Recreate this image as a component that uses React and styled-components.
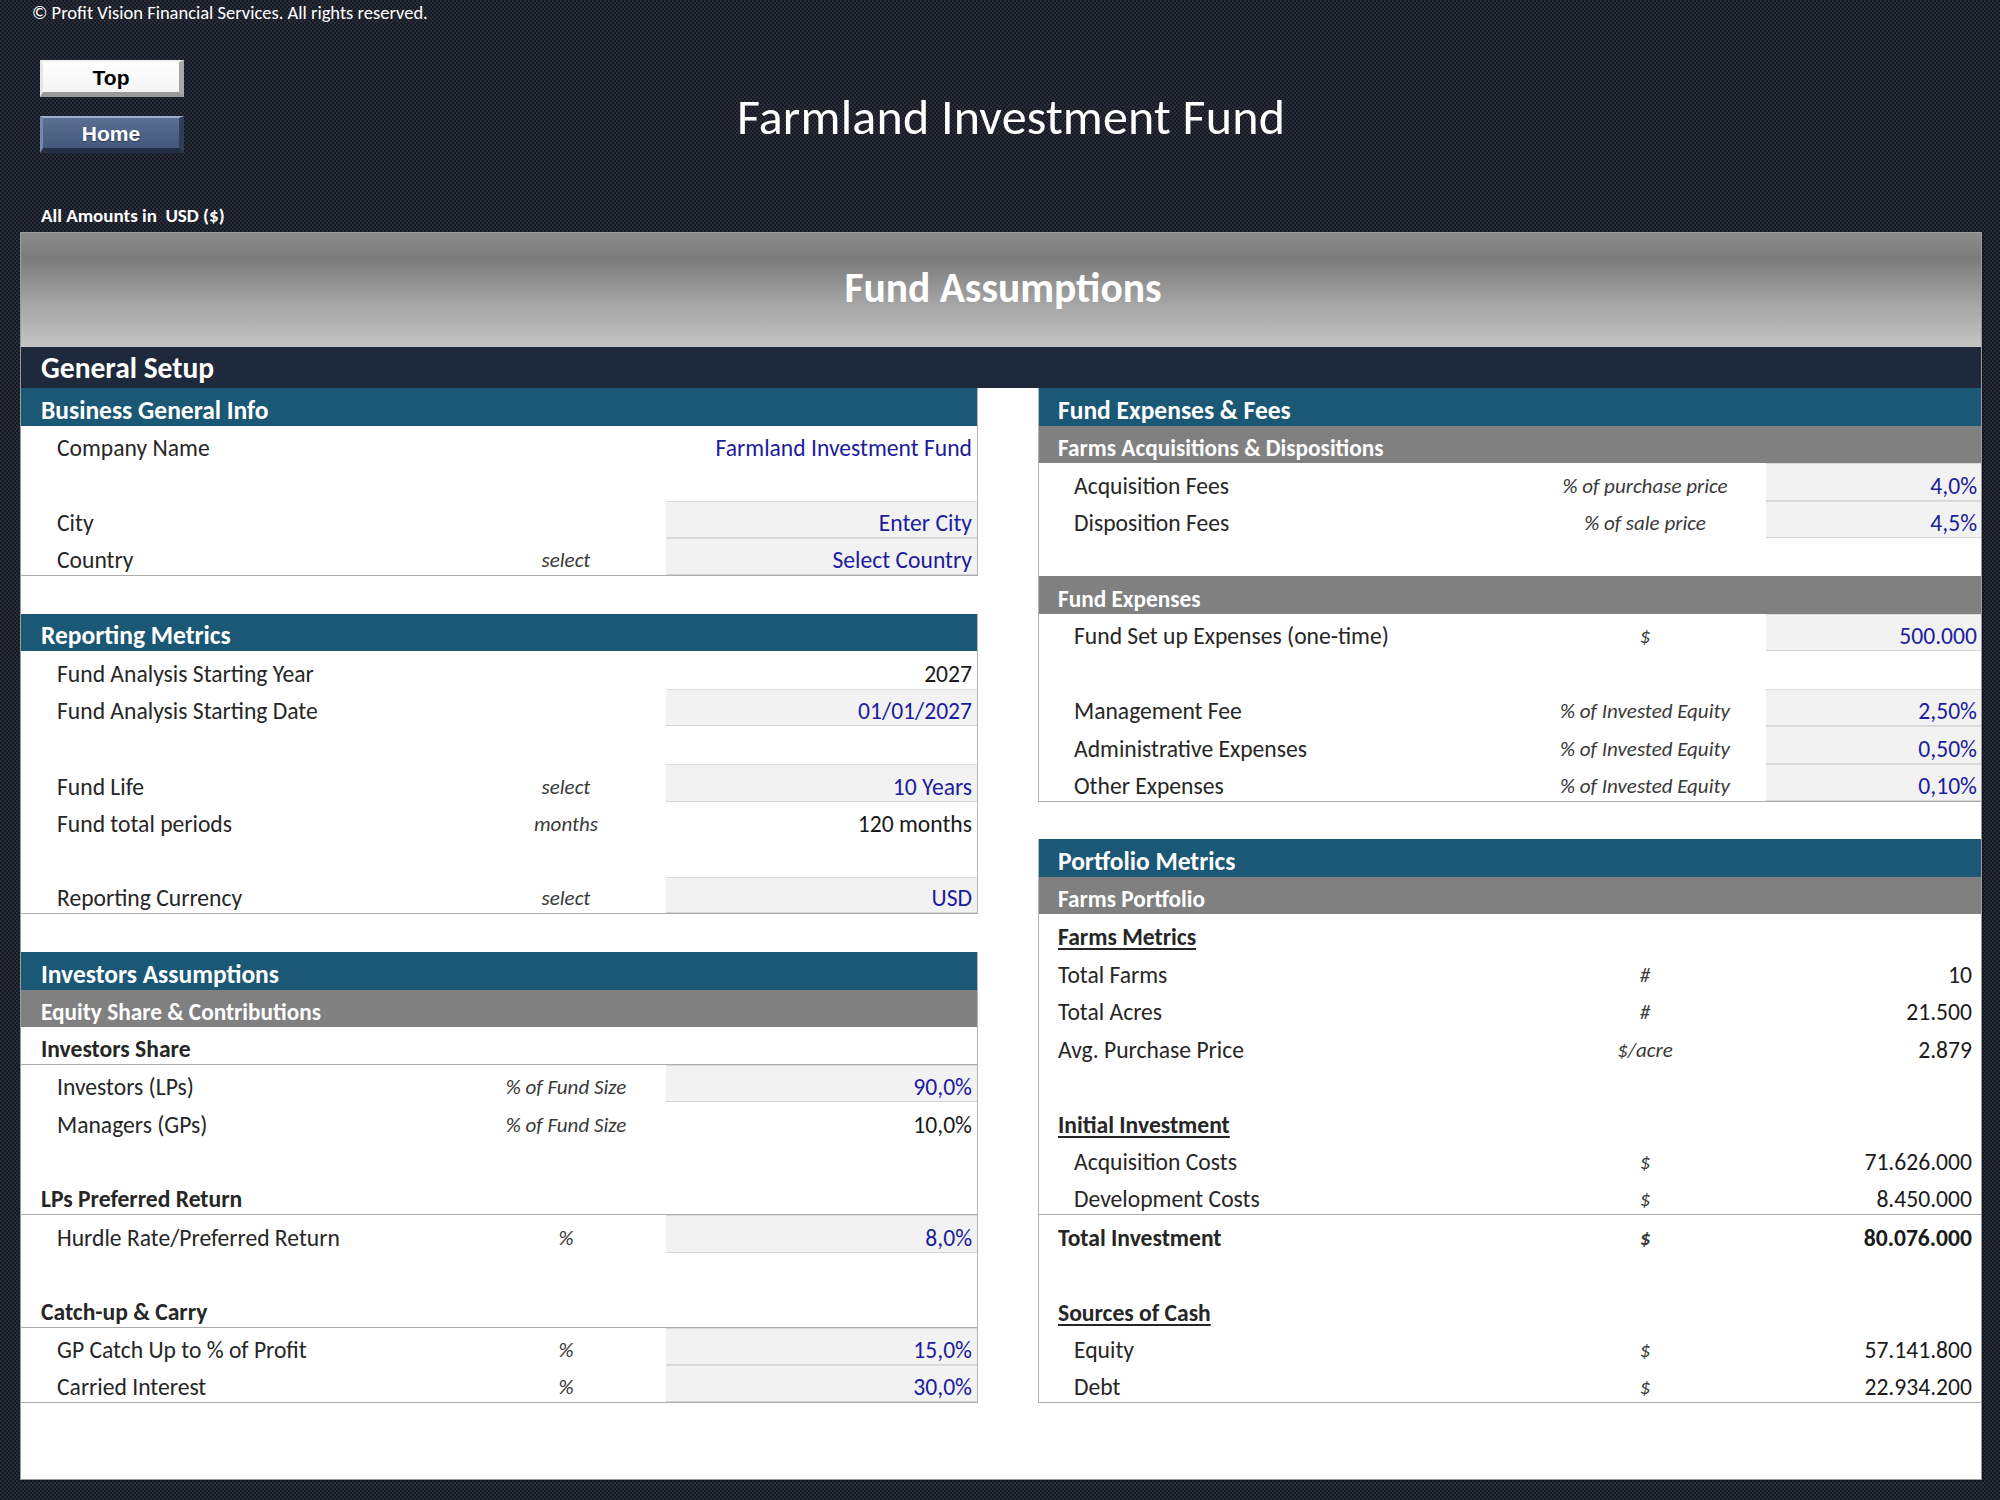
import React from "react";
import styled, { createGlobalStyle } from "styled-components";

const ROW = 37.6;

const GlobalStyle = createGlobalStyle`
  html, body {
    margin: 0;
    padding: 0;
  }
  body {
    font-family: Carlito, Lato, "Noto Sans", sans-serif;
    background: #1d212c;
  }
  * {
    box-sizing: border-box;
  }
`;

//----------- data -------------
const leftColumn = [
  {
    rows: [
      { type: "header", label: "Business General Info" },
      { label: "Company Name", value: "Farmland Investment Fund", blue: true },
      { type: "blank" },
      { label: "City", value: "Enter City", input: true },
      { label: "Country", unit: "select", value: "Select Country", input: true },
    ],
  },
  { spacer: true },
  {
    rows: [
      { type: "header", label: "Reporting Metrics" },
      { label: "Fund Analysis Starting Year", value: "2027" },
      { label: "Fund Analysis Starting Date", value: "01/01/2027", input: true },
      { type: "blank" },
      { label: "Fund Life", unit: "select", value: "10 Years", input: true },
      { label: "Fund total periods", unit: "months", value: "120 months" },
      { type: "blank" },
      { label: "Reporting Currency", unit: "select", value: "USD", input: true },
    ],
  },
  { spacer: true },
  {
    rows: [
      { type: "header", label: "Investors Assumptions" },
      { type: "sub", label: "Equity Share & Contributions" },
      { type: "bold", label: "Investors Share", line: true },
      { label: "Investors (LPs)", unit: "% of Fund Size", value: "90,0%", input: true },
      { label: "Managers (GPs)", unit: "% of Fund Size", value: "10,0%" },
      { type: "blank" },
      { type: "bold", label: "LPs Preferred Return", line: true },
      { label: "Hurdle Rate/Preferred Return", unit: "%", value: "8,0%", input: true },
      { type: "blank" },
      { type: "bold", label: "Catch-up & Carry", line: true },
      { label: "GP Catch Up to % of Profit", unit: "%", value: "15,0%", input: true },
      { label: "Carried Interest", unit: "%", value: "30,0%", input: true },
    ],
  },
];

const rightColumn = [
  {
    rows: [
      { type: "header", label: "Fund Expenses & Fees" },
      { type: "sub", label: "Farms Acquisitions & Dispositions" },
      { label: "Acquisition Fees", unit: "% of purchase price", value: "4,0%", input: true },
      { label: "Disposition Fees", unit: "% of sale price", value: "4,5%", input: true },
      { type: "blank" },
      { type: "sub", label: "Fund Expenses" },
      { label: "Fund Set up Expenses (one-time)", unit: "$", value: "500.000", input: true },
      { type: "blank" },
      { label: "Management Fee", unit: "% of Invested Equity", value: "2,50%", input: true },
      { label: "Administrative Expenses", unit: "% of Invested Equity", value: "0,50%", input: true },
      { label: "Other Expenses", unit: "% of Invested Equity", value: "0,10%", input: true },
    ],
  },
  { spacer: true },
  {
    rows: [
      { type: "header", label: "Portfolio Metrics" },
      { type: "sub", label: "Farms Portfolio" },
      { type: "bold", label: "Farms Metrics", underline: true },
      { label: "Total Farms", unit: "#", value: "10", flat: true },
      { label: "Total Acres", unit: "#", value: "21.500", flat: true },
      { label: "Avg. Purchase Price", unit: "$/acre", value: "2.879", flat: true },
      { type: "blank" },
      { type: "bold", label: "Initial Investment", underline: true },
      { label: "Acquisition Costs", unit: "$", value: "71.626.000", wide: true },
      { label: "Development Costs", unit: "$", value: "8.450.000", wide: true, line: true },
      { label: "Total Investment", unit: "$", value: "80.076.000", flat: true, strong: true, wide: true },
      { type: "blank" },
      { type: "bold", label: "Sources of Cash", underline: true },
      { label: "Equity", unit: "$", value: "57.141.800", wide: true },
      { label: "Debt", unit: "$", value: "22.934.200", wide: true },
    ],
  },
];

//----------- components -------------
function Block({ rows, side }) {
  const columns = side === "left" ? "445px 200px 1fr" : "485px 242px 1fr";
  const pad = side === "left" ? 20 : 19;
  return (
    <BlockBox $side={side}>
      {rows.map((r, i) => {
        if (r.type === "header") {
          return (
            <HeaderCell key={i} $pad={pad}>
              {r.label}
            </HeaderCell>
          );
        }
        if (r.type === "sub") {
          return (
            <SubHeaderCell key={i} $pad={pad}>
              {r.label}
            </SubHeaderCell>
          );
        }
        if (r.type === "bold") {
          return (
            <Row key={i} $columns={columns} $line={r.line}>
              <Label $pad={pad} $bold $underline={r.underline}>
                {r.label}
              </Label>
            </Row>
          );
        }
        if (r.type === "blank") {
          return <Row key={i} $columns={columns} />;
        }
        return (
          <Row key={i} $columns={columns} $line={r.line}>
            <Label $pad={r.flat ? pad : pad + 16} $bold={r.strong}>
              {r.label}
            </Label>
            <Unit $bold={r.strong}>{r.unit}</Unit>
            <Value
              $input={r.input}
              $blue={r.blue || r.input}
              $bold={r.strong}
              $right={r.wide || r.flat ? 9 : side === "left" ? 5 : 4}
            >
              {r.value}
            </Value>
          </Row>
        );
      })}
    </BlockBox>
  );
}

function Column({ items, side }) {
  return (
    <ColumnBox>
      {items.map((item, i) =>
        item.spacer ? <Spacer key={i} /> : <Block key={i} rows={item.rows} side={side} />
      )}
    </ColumnBox>
  );
}

export default function App() {
  return (
    <Page>
      <GlobalStyle />
      <Copyright>© Profit Vision Financial Services. All rights reserved.</Copyright>
      <HeaderRow>
        <ButtonStack>
          <NavButton $variant="light">Top</NavButton>
          <NavButton $variant="dark">Home</NavButton>
        </ButtonStack>
        <Title>Farmland Investment Fund</Title>
        <div />
      </HeaderRow>
      <AmountsNote>All Amounts in&nbsp; USD ($)</AmountsNote>
      <Panel>
        <Banner>Fund Assumptions</Banner>
        <SectionBar>General Setup</SectionBar>
        <Columns>
          <Column items={leftColumn} side="left" />
          <Column items={rightColumn} side="right" />
        </Columns>
      </Panel>
    </Page>
  );
}

//----------- page frame -------------
const Page = styled.div`
  width: 2000px;
  min-height: 1500px;
  padding: 0 18px 20px 20px;
  background-color: #1d212c;
  background-image: repeating-conic-gradient(#161a23 0 25%, #282d39 0 50%);
  background-size: 4px 4px;
`;

const Copyright = styled.div`
  color: #ffffff;
  font-size: 18.5px;
  line-height: 22px;
  padding: 2px 0 0 12px;
  height: 26px;
`;

const HeaderRow = styled.div`
  display: grid;
  grid-template-columns: 200px 1fr 180px;
  margin-top: 34px;
`;

const ButtonStack = styled.div`
  display: flex;
  flex-direction: column;
  gap: 19px;
  padding-left: 20px;
`;

//상단 버튼
const NavButton = styled.button`
  width: 144px;
  height: 37px;
  padding: 0;
  font-family: "Liberation Sans", Arial, sans-serif;
  font-weight: bold;
  font-size: 21px;
  line-height: 1;
  cursor: pointer;
  border-style: solid;
  border-width: 2px 5px 5px 3px;
  color: ${(p) => (p.$variant === "light" ? "#000000" : "#ffffff")};
  background: ${(p) =>
    p.$variant === "light"
      ? "linear-gradient(#ffffff, #f4f4f4)"
      : "linear-gradient(#5b6f93, #44587c)"};
  border-color: ${(p) =>
    p.$variant === "light"
      ? "#f2f2f2 #a8a8a8 #9a9a9a #e6e6e6"
      : "#9cb0d2 #2f3d58 #232f46 #7488ad"};
  text-shadow: ${(p) => (p.$variant === "light" ? "none" : "0 1px 1px #2a3650")};
`;

const Title = styled.div`
  color: #ffffff;
  font-size: 50px;
  line-height: 60px;
  text-align: center;
  padding-top: 27px;
  letter-spacing: 0.2px;
`;

const AmountsNote = styled.div`
  color: #ffffff;
  font-weight: bold;
  font-size: 19px;
  line-height: 24px;
  height: 24px;
  margin: 51px 0 4px;
  padding-left: 21px;
`;

//----------- panel -------------
const Panel = styled.div`
  background: #ffffff;
  border: 1px solid #9c9c9c;
  height: 1248px;
  box-shadow: 1px 1px 2px rgba(0, 0, 0, 0.5);
`;

const Banner = styled.div`
  height: 114px;
  display: flex;
  align-items: center;
  justify-content: center;
  padding: 0 0 6px 4px;
  color: #ffffff;
  font-weight: bold;
  font-size: 41.5px;
  background: linear-gradient(#8d8d8d 0%, #7b7b7b 22%, #a3a3a3 60%, #c4c4c4 100%);
`;

const SectionBar = styled.div`
  height: 41px;
  background: #1e2a3c;
  color: #ffffff;
  font-weight: bold;
  font-size: 29.5px;
  line-height: 41px;
  padding: 1px 0 0 20px;
`;

const Columns = styled.div`
  display: grid;
  grid-template-columns: 957px 1fr;
  column-gap: 60px;
`;

const ColumnBox = styled.div`
  display: flex;
  flex-direction: column;
`;

const Spacer = styled.div`
  height: ${ROW}px;
`;

//섹션 블록
const BlockBox = styled.div`
  border-bottom: 1px solid #ababab;
  ${(p) => (p.$side === "left" ? "border-right" : "border-left")}: 1px solid #b5b5b5;
  & > *:last-child {
    height: ${ROW - 1}px;
  }
`;

const HeaderCell = styled.div`
  height: ${ROW}px;
  background: #1b5876;
  color: #ffffff;
  font-weight: bold;
  font-size: 25.5px;
  line-height: 30px;
  display: flex;
  align-items: flex-end;
  padding: 0 0 0 ${(p) => p.$pad}px;
  white-space: nowrap;
`;

const SubHeaderCell = styled(HeaderCell)`
  background: #808080;
  font-size: 23.3px;
  line-height: 28px;
  padding-bottom: 1px;
`;

const Row = styled.div`
  display: grid;
  grid-template-columns: ${(p) => p.$columns};
  height: ${ROW}px;
  border-bottom: ${(p) => (p.$line ? "1px solid #ababab" : "none")};
`;

const Cell = styled.div`
  display: flex;
  align-items: flex-end;
  padding-bottom: 1px;
  font-size: 23.6px;
  line-height: 28px;
  color: #262626;
  white-space: nowrap;
  font-weight: ${(p) => (p.$bold ? "bold" : "normal")};
`;

const Label = styled(Cell)`
  padding-left: ${(p) => p.$pad}px;
  text-decoration: ${(p) => (p.$underline ? "underline" : "none")};
  text-underline-offset: 3px;
`;

const Unit = styled(Cell)`
  justify-content: center;
  font-style: italic;
  font-size: 21px;
  color: #3a3a3a;
`;

const Value = styled(Cell)`
  justify-content: flex-end;
  padding-right: ${(p) => p.$right}px;
  color: ${(p) => (p.$blue ? "#1c1c9e" : "#1a1a1a")};
  background: ${(p) => (p.$input ? "#f2f2f2" : "transparent")};
  box-shadow: ${(p) =>
    p.$input ? "inset 0 1px 0 #dcdcdc, inset 0 -1px 0 #d6d6d6" : "none"};
`;
